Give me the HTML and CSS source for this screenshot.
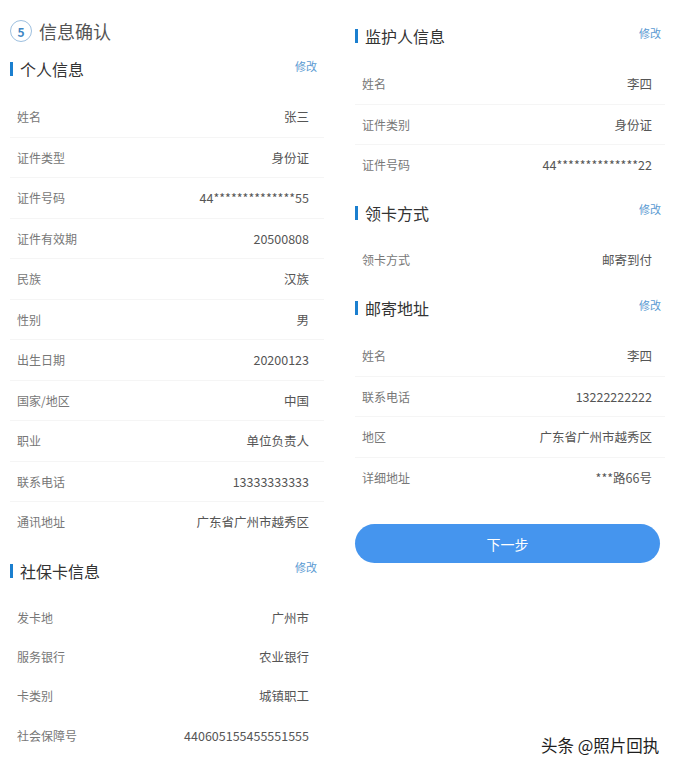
FILE: index.html
```html
<!DOCTYPE html>
<html>
<head>
<meta charset="utf-8">
<link rel="stylesheet" href="styles.css">
</head>
<body>

<div class="page">
  <div class="col">
    <div class="step">
      <span class="step-num">5</span>
      <span class="step-title">信息确认</span>
    </div>

    <div class="sec-head">
      <span class="sec-title">个人信息</span>
      <a class="edit">修改</a>
    </div>
    <div class="row first"><span class="label">姓名</span><span class="value">张三</span></div>
    <div class="row"><span class="label">证件类型</span><span class="value">身份证</span></div>
    <div class="row"><span class="label">证件号码</span><span class="value">44**************55</span></div>
    <div class="row"><span class="label">证件有效期</span><span class="value">20500808</span></div>
    <div class="row"><span class="label">民族</span><span class="value">汉族</span></div>
    <div class="row"><span class="label">性别</span><span class="value">男</span></div>
    <div class="row"><span class="label">出生日期</span><span class="value">20200123</span></div>
    <div class="row"><span class="label">国家/地区</span><span class="value">中国</span></div>
    <div class="row"><span class="label">职业</span><span class="value">单位负责人</span></div>
    <div class="row"><span class="label">联系电话</span><span class="value">13333333333</span></div>
    <div class="row"><span class="label">通讯地址</span><span class="value">广东省广州市越秀区</span></div>

    <div class="sec-head">
      <span class="sec-title">社保卡信息</span>
      <a class="edit">修改</a>
    </div>
    <div class="row tight first"><span class="label">发卡地</span><span class="value">广州市</span></div>
    <div class="row tight"><span class="label">服务银行</span><span class="value">农业银行</span></div>
    <div class="row tight"><span class="label">卡类别</span><span class="value">城镇职工</span></div>
    <div class="row tight"><span class="label">社会保障号</span><span class="value">440605155455551555</span></div>
  </div>

  <div class="col right">
    <div class="sec-head top">
      <span class="sec-title">监护人信息</span>
      <a class="edit">修改</a>
    </div>
    <div class="row first"><span class="label">姓名</span><span class="value">李四</span></div>
    <div class="row"><span class="label">证件类别</span><span class="value">身份证</span></div>
    <div class="row"><span class="label">证件号码</span><span class="value">44**************22</span></div>

    <div class="sec-head">
      <span class="sec-title">领卡方式</span>
      <a class="edit">修改</a>
    </div>
    <div class="row first"><span class="label">领卡方式</span><span class="value">邮寄到付</span></div>

    <div class="sec-head">
      <span class="sec-title">邮寄地址</span>
      <a class="edit">修改</a>
    </div>
    <div class="row first"><span class="label">姓名</span><span class="value">李四</span></div>
    <div class="row"><span class="label">联系电话</span><span class="value">13222222222</span></div>
    <div class="row"><span class="label">地区</span><span class="value">广东省广州市越秀区</span></div>
    <div class="row"><span class="label">详细地址</span><span class="value">***路66号</span></div>

    <button class="next">下一步</button>
  </div>
</div>

<div class="mark">头条 @照片回执</div>

</body>
</html>
```

FILE: styles.css
```css
body {
    margin: 0;
    background: #fff;
    font-family: "Noto Sans CJK SC", "Noto Sans", sans-serif;
    color: #444;
}

.page {
    display: grid;
    grid-template-columns: 314px 310px;
    column-gap: 31px;
    padding: 0 0 0 10px;
}

/* step title */
.step {
    display: flex;
    align-items: center;
    height: 24px;
    margin-top: 19px;
}

.step-num {
    width: 20px;
    height: 20px;
    border: 1.5px solid #9dbfdf;
    border-radius: 50%;
    display: flex;
    align-items: center;
    justify-content: center;
    font-size: 12px;
    font-weight: bold;
    color: #3f86c4;
}

.step-title {
    margin-left: 7px;
    font-size: 18px;
    color: #555;
}

/* section header */
.sec-head {
    display: flex;
    align-items: center;
    justify-content: space-between;
    height: 28px;
    margin-top: 15px;
    margin-bottom: 13px;
}

.right .sec-head {
    margin-top: 14px;
    margin-bottom: 13px;
}

.right .sec-head.top {
    margin-top: 22px;
}

.col .step + .sec-head {
    margin-top: 12px;
}

.sec-title {
    font-size: 16px;
    color: #333;
    border-left: 3px solid #1b7fcf;
    padding-left: 7px;
    line-height: 14px;
}

.edit {
    font-size: 11px;
    color: #5a9ad2;
    margin-top: -7px;
    padding-right: 7px;
}

.right .edit {
    padding-right: 4px;
}

/* rows */
.row {
    display: flex;
    align-items: center;
    justify-content: space-between;
    height: 40.5px;
    box-sizing: border-box;
    border-top: 1px solid #f5f5f5;
    padding: 0 15px 0 7px;
}

.row.first {
    border-top: none;
}

.row.tight {
    height: 39.4px;
    border-top: none;
}

.label {
    font-size: 12px;
    color: #777;
}

.value {
    font-size: 12.5px;
    color: #555;
}

.right .row {
    padding-right: 13px;
}

.next {
    display: block;
    width: 305px;
    height: 39px;
    margin: 27px 0 0 0;
    border: none;
    border-radius: 20px;
    background-color: #4595ee;
    color: #fff;
    font-family: inherit;
    font-size: 14px;
}

/* watermark */
.mark {
    position: absolute;
    left: 541px;
    top: 733px;
    font-size: 16.5px;
    color: #1e1e1e;
    text-shadow: 0 0 2px #fff;
}
```
